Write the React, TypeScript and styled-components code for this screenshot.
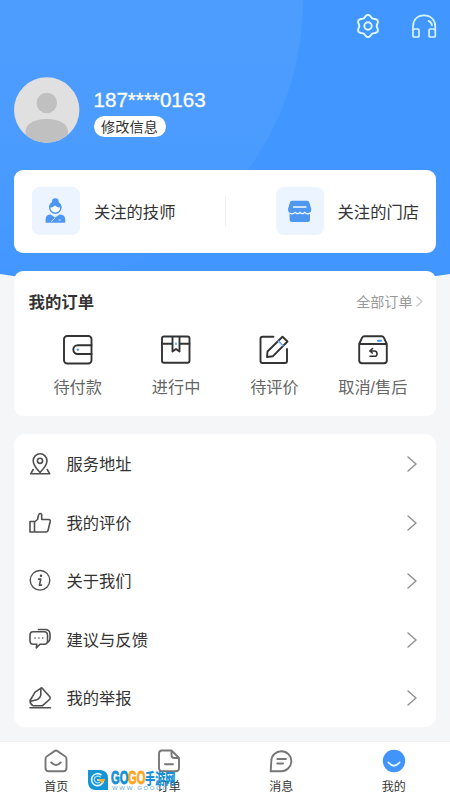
import React from "react";
import styled, { createGlobalStyle } from "styled-components";

const Global = createGlobalStyle`
  * { box-sizing: border-box; }
  body { margin: 0; background: #f5f6f8; }
  svg { display: block; flex: none; overflow: visible; }
`;

const Page = styled.div`
  position: relative;
  width: 450px;
  height: 800px;
  overflow: hidden;
  display: flex;
  flex-direction: column;
  background: #f5f6f8;
  color: #333;
  font-family: "Liberation Sans", "Noto Sans CJK SC", sans-serif;
`;

const Backdrop = styled.svg`
  position: absolute;
  left: 0;
  top: 0;
`;

const Header = styled.header`
  position: relative;
  height: 170px;
  padding: 12px 14px 0 14px;
`;

const Actions = styled.div`
  display: flex;
  justify-content: flex-end;
  gap: 32px;
`;

const Profile = styled.div`
  display: flex;
  align-items: center;
  gap: 13.5px;
  margin-top: 37px;
`;

const Identity = styled.div`
  display: flex;
  flex-direction: column;
  align-items: flex-start;
  padding-top: 5px;
`;

const Phone = styled.div`
  font-size: 20.6px;
  line-height: 24px;
  color: #fff;
  -webkit-text-stroke: 0.3px #fff;
`;

const EditButton = styled.button`
  width: 72px;
  height: 21px;
  margin-top: 4px;
  padding: 0;
  border: 0;
  border-radius: 11px;
  background: #fff;
  color: #333;
  font: 14.2px/21px "Noto Sans CJK SC", sans-serif;
`;

const Card = styled.section`
  position: relative;
  margin: 0 14px;
  border-radius: 9px;
  background: #fff;
`;

const Follows = styled(Card)`
  display: flex;
  align-items: center;
  justify-content: space-between;
  height: 82.5px;
  padding: 0 17px 0 18px;
`;

const Follow = styled.div`
  display: flex;
  align-items: center;
  gap: 14px;
  font-size: 16.3px;
  line-height: 24px;
`;

const FollowLabel = styled.span`
  padding-top: 2px;
`;

const Tile = styled.div`
  width: 48px;
  height: 48px;
  border-radius: 8px;
  background: #ecf4ff;
`;

const Divider = styled.div`
  width: 1px;
  height: 31px;
  background: #f0f1f3;
`;

const Orders = styled(Card)`
  height: 145px;
  margin-top: 18.5px;
  padding: 19px 13px 0 14.5px;
`;

const OrdersHead = styled.div`
  display: flex;
  justify-content: space-between;
  align-items: center;
  height: 24px;
`;

const Title = styled.h2`
  margin: 0;
  font-size: 16.4px;
  line-height: 24px;
  font-weight: 700;
`;

const More = styled.div`
  display: flex;
  align-items: center;
  gap: 3.5px;
  margin-top: -2px;
  font-size: 14.1px;
  color: #999;
`;

const OrderGrid = styled.div`
  display: grid;
  grid-template-columns: repeat(4, 98.4px);
  margin-top: 20px;
`;

const Order = styled.div`
  display: flex;
  flex-direction: column;
  align-items: center;
  gap: 9px;
  color: #666;
  font-size: 16.2px;
  line-height: 24px;
  white-space: nowrap;
`;

const Menu = styled(Card)`
  height: 293px;
  margin-top: 18px;
  padding-top: 1px;
  border-radius: 11px;
`;

const MenuRow = styled.div`
  display: flex;
  align-items: center;
  height: 58.5px;
  padding: 0 19px 0 14px;
  font-size: 16.3px;
  line-height: 24px;
`;

const MenuLabel = styled.span`
  flex: 1;
  margin-left: 14.5px;
`;

const TabBar = styled.nav`
  position: absolute;
  left: 0;
  right: 0;
  bottom: 0;
  height: 59px;
  display: grid;
  grid-template-columns: repeat(4, 1fr);
  border-top: 1px solid #eeeff1;
  background: #fff;
`;

const Tab = styled.div`
  display: flex;
  flex-direction: column;
  align-items: center;
  padding-top: 7px;
  gap: 5px;
  font-size: 12px;
  line-height: 18px;
`;

const Watermark = styled.div`
  position: absolute;
  left: 88px;
  top: 770px;
  display: flex;
  gap: 3px;
`;

const Brand = styled.div`
  display: flex;
  flex-direction: column;
`;

const BrandName = styled.div`
  display: flex;
  align-items: center;
  height: 15px;
  white-space: nowrap;
`;

const Word = styled.span<{ $color: string }>`
  width: 17px;
  color: ${(p) => p.$color};
  font: 700 18px/16px "Liberation Sans", sans-serif;
  -webkit-text-stroke: 0.9px ${(p) => p.$color};
  transform: scaleX(0.62);
  transform-origin: left;
`;

const BrandCjk = styled.span`
  width: 30px;
  color: #1590d8;
  font: 900 14.5px/16px "Noto Sans CJK SC", sans-serif;
  transform: scaleX(0.7);
  transform-origin: left;
`;

const BrandUrl = styled.span`
  padding-left: 1px;
  color: #5fa9d8;
  font: 6px/6px "Liberation Sans", sans-serif;
  letter-spacing: 1.7px;
  white-space: nowrap;
`;

const gearPath =
  Array.from({ length: 72 }, (_, i) => {
    const a = (i / 72) * Math.PI * 2;
    const r = 9.9 + 1.15 * Math.cos(6 * a);
    return `${i ? "L" : "M"}${(12 + r * Math.sin(a)).toFixed(2)} ${(12 - r * Math.cos(a)).toFixed(2)}`;
  }).join("") + "Z";

const line = (color: string, width = 1.8) => ({
  fill: "none",
  stroke: color,
  strokeWidth: width,
  strokeLinecap: "round" as const,
  strokeLinejoin: "round" as const,
});

const Chevron = ({ w, h, color }: { w: number; h: number; color: string }) => (
  <svg width={w} height={h} {...line(color, 1.4)}>
    <path d={`M1 1L${w - 1} ${h / 2}L1 ${h - 1}`} />
  </svg>
);

const Gear = () => (
  <svg width="24" height="28" viewBox="0 -2 24 28" {...line("#e3fbff", 1.9)}>
    <path d={gearPath} />
    <circle cx="12" cy="12" r="3.7" />
  </svg>
);

const Headphones = () => (
  <svg width="24" height="28" viewBox="1.3 0 24 28" {...line("#d5f6ff", 1.7)}>
    <path d="M2.3 18V14.5C2.3 8 6.5 3.4 13.3 3.4S24.6 8 24.6 14.5V18" />
    <rect x="2.3" y="17" width="6" height="8" rx="1" />
    <rect x="18.4" y="17" width="6.2" height="8" rx="1" />
    <path d="M17.8 8.9C20 9.8 21 11.3 21.3 13.4" />
  </svg>
);

const Avatar = () => (
  <svg width="66" height="66" viewBox="0 0 66 66">
    <defs>
      <clipPath id="face"><circle cx="32.7" cy="33" r="32.7" /></clipPath>
    </defs>
    <circle cx="32.7" cy="33" r="32.7" fill="#e0e0e0" />
    <g clipPath="url(#face)" fill="#c0c0c0">
      <circle cx="32.8" cy="26" r="10.3" />
      <path d="M11.8 57C9.8 47 20.8 42 32.8 42S55.8 47 53.8 57V66H11.8Z" />
    </g>
  </svg>
);

const Technician = () => (
  <svg width="48" height="48">
    <circle cx="23.3" cy="14.7" r="3.4" fill="#4d97f0" />
    <circle cx="23.3" cy="20.6" r="5.6" fill="#fff" stroke="#4d97f0" strokeWidth="1.4" />
    <path d="M17 20.6C17 12.3 29.6 12.3 29.6 20.6C26.9 20.6 24.4 19.9 23.1 18.4C21.5 20 19.4 20.6 17 20.6Z" fill="#4d97f0" />
    <path d="M13.6 35.7V32.5Q13.6 27.6 18.6 27.6L23.1 30.5L27.6 27.6Q33.2 27.6 33.2 32.5V35.7Z" fill="#4d97f0" />
    <path d="M18.9 35L23.1 30.9M26.4 33H28.9" stroke="#c9e1ff" />
  </svg>
);

const Shop = () => (
  <svg width="48" height="48">
    <path d="M16 13.8H31Q33 13.8 33.6 16.2L35.3 22Q35.3 26.3 32 26.3H15.5Q12 26.3 12 22L13.7 16.2Q14.3 13.8 16 13.8Z" fill="#4d97f0" />
    <path d="M13.6 26V32.5Q13.6 35 16 35H31.5Q34 35 34 32.5V26Z" fill="#4d97f0" />
    <path d="M13.5 26Q16.5 28 19.2 25.3Q21.6 28 24 25.3Q26.4 28 28.8 25.3Q31 28 34.2 26" fill="none" stroke="#fff" strokeWidth="1.2" />
    <path d="M17 20H30.5" stroke="#dcebff" strokeWidth="1.8" />
  </svg>
);

const orderArt = [
  <><rect x="2" y="2" width="27.5" height="27.5" rx="3.2" /><path d="M29.5 11.2H15.7A4.4 4.4 0 0 0 15.7 20H29.5" /><circle cx="15.9" cy="15.6" r="1.2" fill="#4195e8" stroke="none" /></>,
  <><rect x="2" y="2.5" width="27.5" height="26.2" rx="2" /><path d="M2 9.8H12M19.8 9.8H29.5M12.5 3V17.5L16 14.9L19.5 17.5V3" /><circle cx="16" cy="9.8" r="1.2" fill="#6db6ff" stroke="none" /></>,
  <><path d="M15.5 2.8H4.5Q2.5 2.8 2.5 4.8V27Q2.5 29 4.5 29H27Q29 29 29 27V15" /><path d="M9.5 17.5L24.5 2.7L29.5 7.5L15 22.2L9 23Z" /><path d="M20.2 7L25 11.8" stroke="#62aefa" strokeWidth="1.5" /></>,
  <><path d="M2.2 10L5 3.8Q5.7 2.3 7.5 2.3H24.5Q26.3 2.3 27 3.8L29.8 10V26.5Q29.8 29.2 27 29.2H5Q2.2 29.2 2.2 26.5ZM2.2 10H29.8" /><path d="M15.5 14.5L12.8 17L15.3 19M13.2 17H17.5Q20 17 20 19.7T17.5 22.3H13" strokeWidth="1.6" /><path d="M20.8 6.8H24" stroke="#4195e8" /></>,
];

const orders = ["待付款", "进行中", "待评价", "取消/售后"];

const menuArt = [
  <><path d="M12 20.5C9 17 5.2 13.5 5.2 8.7A6.9 6.9 0 0 1 19 8.7C19 13.5 15 17 12 20.5Z" /><circle cx="12" cy="8.8" r="2.6" /><path d="M5.2 17.5L2.7 21.8H21.8L19.2 17.5" /></>,
  <><path d="M2 10.5H6.5V21H2ZM6.5 11L9.5 8.5L10.5 4.2Q11.8 1.2 13.7 3.4V8.5H20.5Q22.6 8.5 22.2 10.5L20 19.5Q19.6 21 18 21H6.5" /></>,
  <><circle cx="12" cy="11.3" r="9.8" strokeWidth="1.4" /><circle cx="13" cy="6.8" r="1.2" fill="#444" stroke="none" /><path d="M10.5 10.1H12.8L11.4 16.1H13.6" strokeWidth="1.6" /></>,
  <><path d="M5 3.8H16.2Q19.5 3.8 19.5 7.3V12.8Q19.5 16.3 16.2 16.3H12L8.3 20L8.8 16.3H5.3Q2 16.3 2 12.8V7.3Q2 3.8 5 3.8Z" /><path d="M10.5 1.5H17Q22 1.5 22 6.3V10.3Q22 12.8 20 14.1" /><path d="M7 10H7.1M10.9 10H11M14.7 10H14.8" strokeWidth="1.6" /></>,
  <><path d="M12.3 2.7L7.1 6.2L2.1 14.5Q1.7 17.5 5 19.7H14.6L22 13V11L14 2Q13.2 1.7 12.3 2.7ZM12.8 3V9.2Q12.4 11.8 9.5 13.5L3 15.3M2 21.8H22.5" /></>,
];

const menuItems = ["服务地址", "我的评价", "关于我们", "建议与反馈", "我的举报"];

const tabArt = [
  <><path d="M12 1.5Q12.6 1.5 13.5 2.1L21 7.2Q22.5 8.2 22.5 10V19Q22.5 22.2 19.3 22.2H4.7Q1.5 22.2 1.5 19V10Q1.5 8.2 3 7.2L10.5 2.1Q11.4 1.5 12 1.5Z" /><path d="M7.3 13.5Q12 18.5 16.7 13.5" /></>,
  <><path d="M13.8 1.5H5Q2 1.5 2 4.5V19Q2 22.2 5 22.2H19Q22 22.2 22 19V9L14.5 1.5V6Q14.5 9 17.5 9H22M8 15.3H16" /></>,
  <><path d="M1.7 22.2L2.3 12A10 10 0 1 1 12.3 22.2ZM8.3 10H17M8.3 14.5H14" /></>,
  <><circle cx="12" cy="12" r="11.2" fill="#4195fa" stroke="none" /><path d="M6.5 13.5Q12 20 17.5 13.5" stroke="#e8f5ff" /></>,
];

const tabs = ["首页", "订单", "消息", "我的"];

export default function App() {
  return (
    <>
      <Global />
      <Page>
        <Backdrop width="450" height="280">
          <defs>
            <clipPath id="hero"><path d="M0 0H450V274Q225 310 0 274Z" /></clipPath>
            <linearGradient id="glow" x1="0" y1="0" x2="0" y2="1">
              <stop offset="0.5" stopColor="#fff" stopOpacity="0.065" />
              <stop offset="0.75" stopColor="#fff" stopOpacity="0.055" />
              <stop offset="1" stopColor="#fff" stopOpacity="0" />
            </linearGradient>
          </defs>
          <g clipPath="url(#hero)">
            <rect width="450" height="280" fill="#4196ff" />
            <circle cx="13" cy="0" r="290" fill="url(#glow)" />
          </g>
        </Backdrop>
        <Header>
          <Actions><Gear /><Headphones /></Actions>
          <Profile>
            <Avatar />
            <Identity>
              <Phone>187****0163</Phone>
              <EditButton>修改信息</EditButton>
            </Identity>
          </Profile>
        </Header>
        <Follows>
          <Follow><Tile><Technician /></Tile><FollowLabel>关注的技师</FollowLabel></Follow>
          <Divider />
          <Follow><Tile><Shop /></Tile><FollowLabel>关注的门店</FollowLabel></Follow>
        </Follows>
        <Orders>
          <OrdersHead>
            <Title>我的订单</Title>
            <More>全部订单<Chevron w={7} h={11} color="#c8c8c8" /></More>
          </OrdersHead>
          <OrderGrid>
            {orders.map((label, i) => (
              <Order key={label}>
                <svg width="32" height="32" {...line("#333", 1.9)}>{orderArt[i]}</svg>
                {label}
              </Order>
            ))}
          </OrderGrid>
        </Orders>
        <Menu>
          {menuItems.map((label, i) => (
            <MenuRow key={label}>
              <svg width="24" height="24" {...line("#505050", 1.6)}>{menuArt[i]}</svg>
              <MenuLabel>{label}</MenuLabel>
              <Chevron w={10} h={16} color="#8e8e8e" />
            </MenuRow>
          ))}
        </Menu>
        <TabBar>
          {tabs.map((label, i) => (
            <Tab key={label}>
              <svg width="24" height="24" {...line("#777", 1.9)}>{tabArt[i]}</svg>
              {label}
            </Tab>
          ))}
        </TabBar>
        <Watermark>
          <svg width="20" height="20">
            <path d="M0 0H13Q20 1 20 8V20H7Q0 19 0 12Z" fill="#1794d5" />
            <path d="M15.5 10H9M15.5 10A6 6 0 1 1 13.5 5.2" fill="none" stroke="#e5f8ff" strokeWidth="1.7" />
            <path d="M12.5 7.5A3.4 3.4 0 1 0 12 12" fill="none" stroke="#a2e2ff" strokeWidth="1.3" />
            <path d="M10 9H17.5L14 13.5Z" fill="#ffad29" />
          </svg>
          <Brand>
            <BrandName>
              <Word $color="#168fd5">GO</Word>
              <Word $color="#ffa51f">GO</Word>
              <BrandCjk>手游网</BrandCjk>
            </BrandName>
            <BrandUrl>WWW.GOOGO</BrandUrl>
          </Brand>
        </Watermark>
      </Page>
    </>
  );
}
